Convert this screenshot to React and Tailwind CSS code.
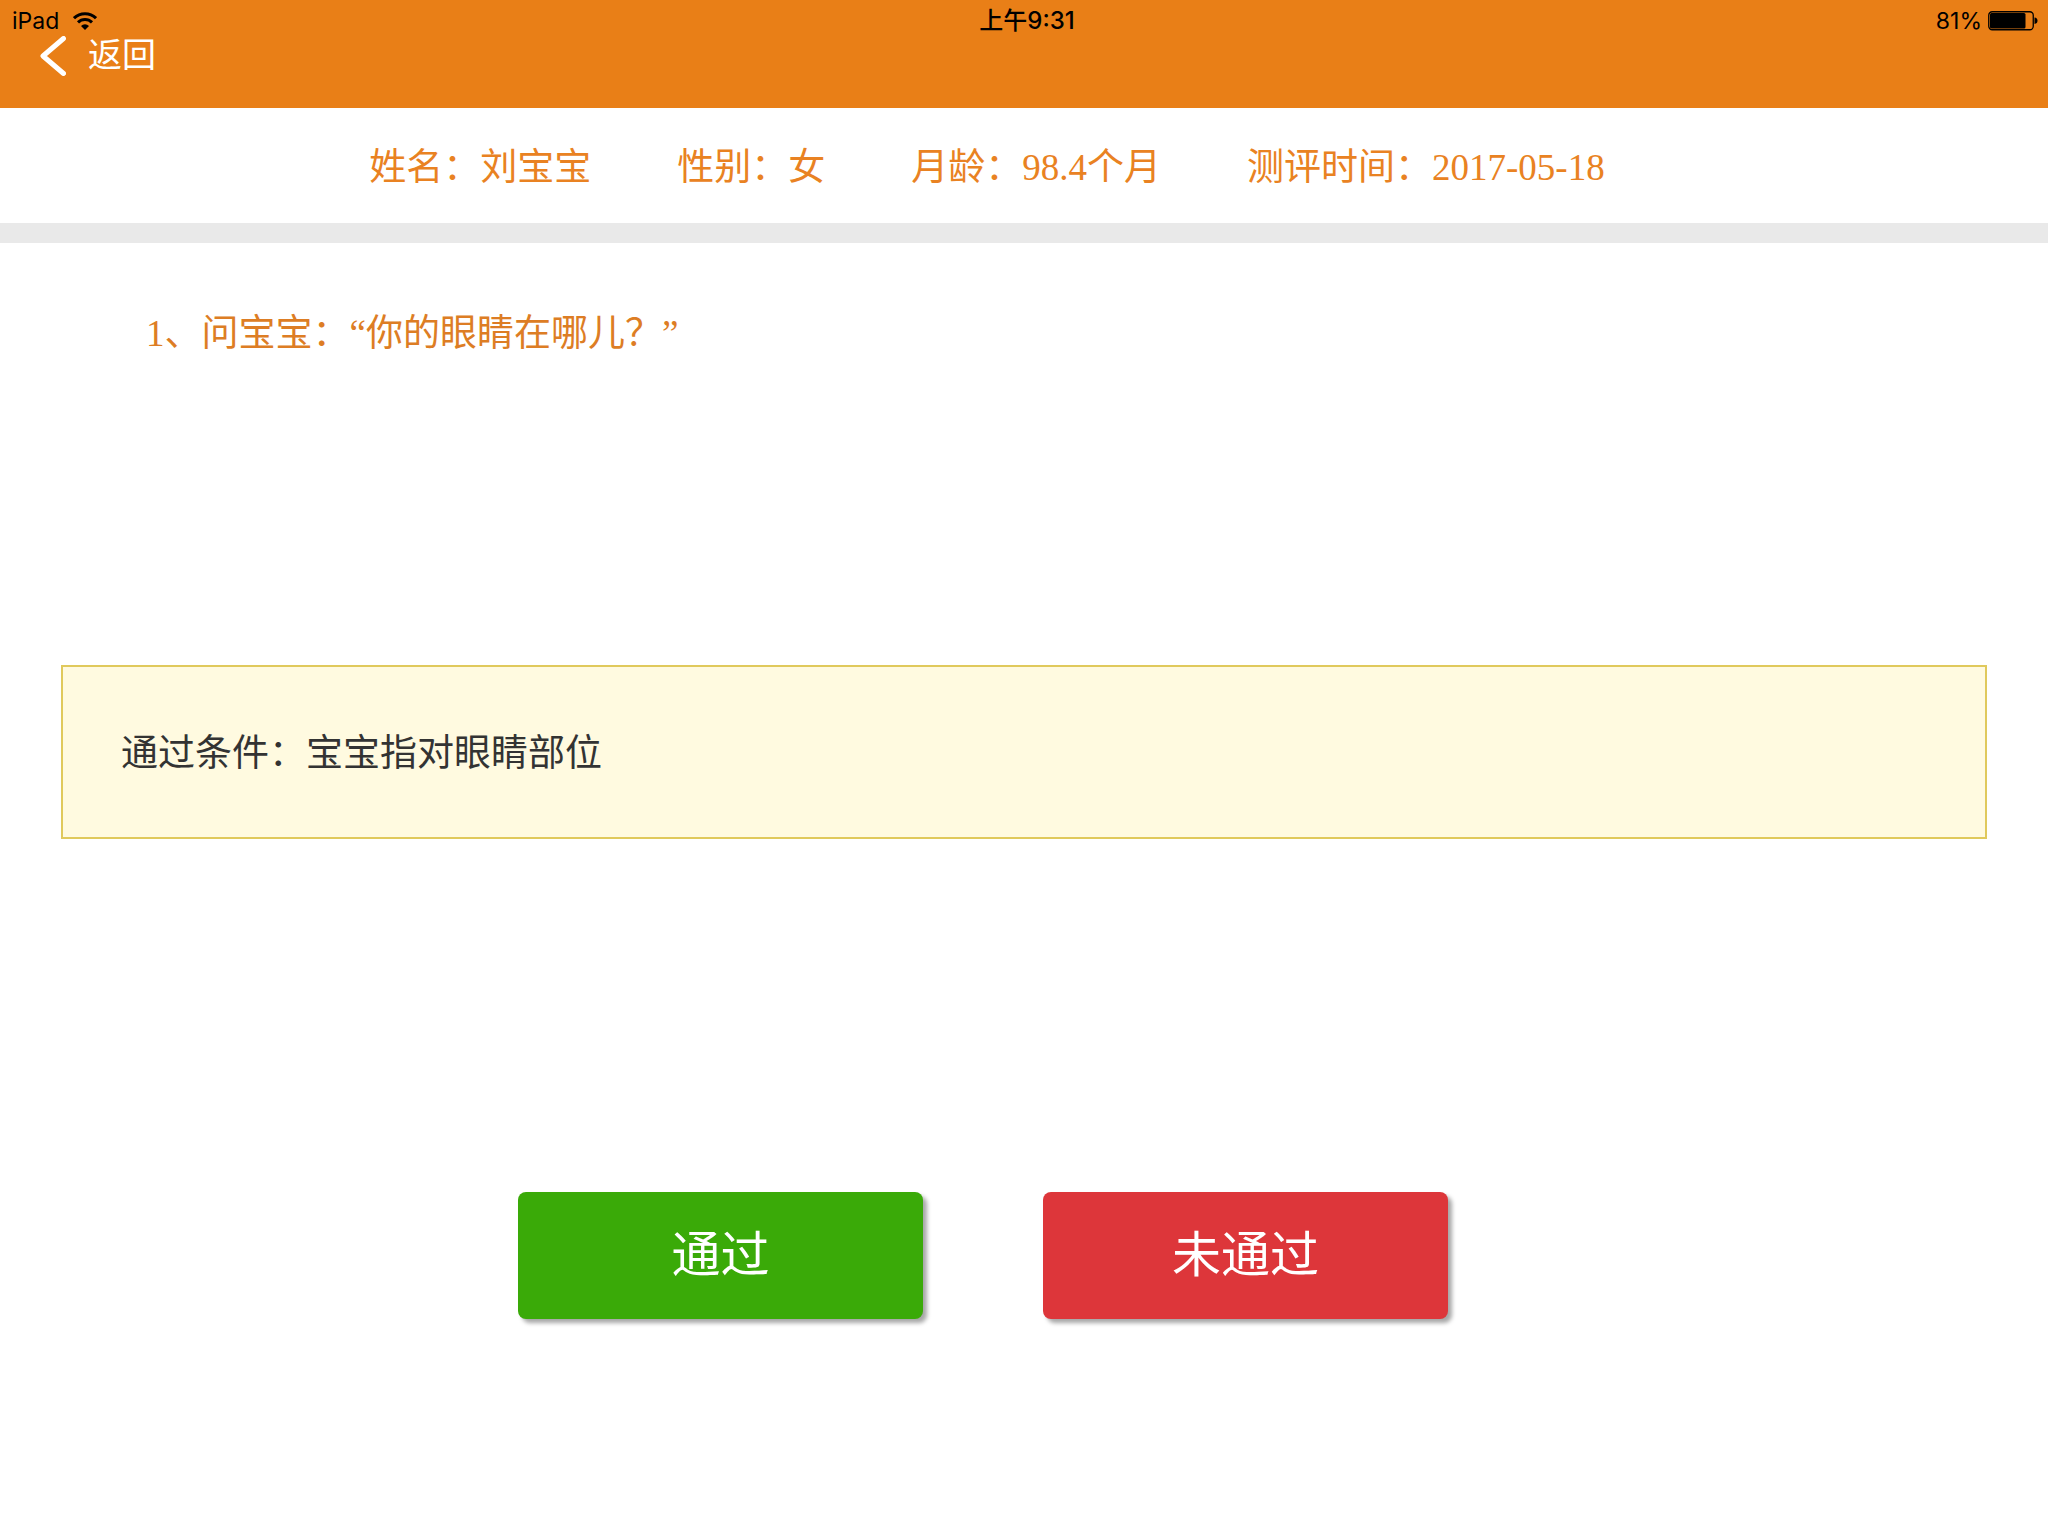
const profile = [
  { label: '姓名', value: '刘宝宝' },
  { label: '性别', value: '女' },
  { label: '月龄', value: '98.4个月' },
  { label: '测评时间', value: '2017-05-18' },
];

const WifiIcon = () => (
  <svg width="24" height="18" viewBox="0 0 24 18" fill="none" stroke="currentColor" strokeWidth="3">
    <path d="M1 6.2a15.6 15.6 0 0 1 22 0" />
    <path d="M5 10.4a9.9 9.9 0 0 1 14 0" />
    <path d="M12 18l-4-4.1a5.7 5.7 0 0 1 8 0z" fill="currentColor" stroke="none" />
  </svg>
);

const BatteryIcon = () => (
  <svg width="50" height="20" viewBox="0 0 50 20" fill="none">
    <rect x="0.75" y="0.75" width="44.5" height="18" rx="3.5" stroke="currentColor" strokeWidth="1.3" />
    <rect x="2" y="2" width="35.5" height="15.5" rx="1.5" fill="currentColor" />
    <path d="M46.5 6.5c2 .2 3 1.5 3 3.2s-1 3-3 3.2z" fill="currentColor" />
  </svg>
);

const StatusBar = () => (
  <div className="grid h-[42px] grid-cols-3 items-center pl-3 pr-[10px] font-['Inter','Noto_Sans_CJK_SC',sans-serif] text-[23px] leading-10 text-black">
    <div className="flex items-center gap-[14px]">
      <span>iPad</span>
      <WifiIcon />
    </div>
    <div className="pl-1 text-center text-[24px] font-medium">上午9:31</div>
    <div className="flex items-center justify-end gap-[6px]">
      <span>81%</span>
      <BatteryIcon />
    </div>
  </div>
);

const Header = () => (
  <header className="h-[108px] bg-[#e97f17]">
    <StatusBar />
    <button type="button" className="-mt-[6px] ml-10 flex h-10 items-center gap-[22px] text-[34px] leading-10 text-white">
      <svg width="26" height="40" viewBox="0 0 26 40" fill="none" stroke="currentColor" strokeWidth="5" strokeLinecap="round" strokeLinejoin="round">
        <path d="M23.5 2.5L3 20l20.5 17.5" />
      </svg>
      返回
    </button>
  </header>
);

const ProfileBar = () => (
  <dl className="flex h-[135px] justify-center border-b-20 border-[#e9e9e9] pt-[33px] pl-3 text-[#e98222]">
    {profile.map(({ label, value }) => (
      <div key={label} className="mr-[86px] flex">
        <dt>{label}：</dt>
        <dd>{value}</dd>
      </div>
    ))}
  </dl>
);

const App = () => {
  return (
    <div className="min-h-screen bg-white font-['Liberation_Serif','Noto_Sans_CJK_SC',sans-serif] text-[37px] leading-[54px]">
      <Header />
      <ProfileBar />
      <main>
        <h1 className="min-h-[422px] px-[146px] pt-16 text-[#dd7d24]">1、问宝宝：“你的眼睛在哪儿？”</h1>
        <p className="mx-[61px] border-2 border-[#e0c95c] bg-[#fffae0] px-[58px] pt-[60px] pb-14 text-[#333333]">
          通过条件：宝宝指对眼睛部位
        </p>
        <div className="mt-[353px] flex justify-center gap-[120px] pr-[82px] text-[49px] text-white">
          <button type="button" className="h-[127px] w-[405px] rounded-lg bg-[#3aaa08] shadow-[4px_4px_4px_rgba(0,0,0,0.35)]">
            通过
          </button>
          <button type="button" className="h-[127px] w-[405px] rounded-lg bg-[#dd363a] shadow-[4px_4px_4px_rgba(0,0,0,0.35)]">
            未通过
          </button>
        </div>
      </main>
    </div>
  );
};

export default App;
